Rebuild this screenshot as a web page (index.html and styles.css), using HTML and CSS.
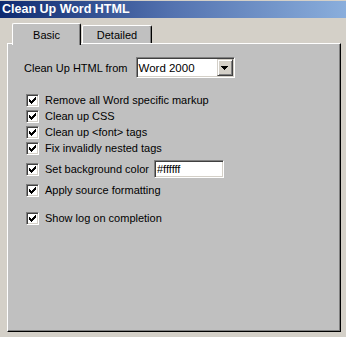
FILE: index.html
```html
<!DOCTYPE html>
<html lang="en">
<head>
  <meta charset="UTF-8" />
  <title>Clean Up Word HTML</title>
  <link rel="stylesheet" href="styles.css">
</head>
<body>
  <div class="titlebar">Clean Up Word HTML</div>

  <div class="dialog">
    <div class="tabs">
      <div class="tab active">Basic</div>
      <div class="tab">Detailed</div>
    </div>

    <div class="panel">
      <div class="field-row">
        <span class="label">Clean Up HTML from</span>
        <div class="select">
          <span class="select-value">Word 2000</span>
          <span class="select-btn">
            <svg width="7" height="4" viewBox="0 0 7 4" shape-rendering="crispEdges">
              <path d="M0 0h7v1H0z M1 1h5v1H1z M2 2h3v1H2z M3 3h1v1H3z" fill="#000"/>
            </svg>
          </span>
        </div>
      </div>

      <div class="group first">
        <div class="check-row">
          <span class="checkbox"><svg width="7" height="7" viewBox="0 0 7 7" shape-rendering="crispEdges"><path d="M0 2h1v3H0z M1 3h1v3H1z M2 4h1v3H2z M3 3h1v3H3z M4 2h1v3H4z M5 1h1v3H5z M6 0h1v3H6z" fill="#000"/></svg></span>
          <span>Remove all Word specific markup</span>
        </div>
        <div class="check-row">
          <span class="checkbox"><svg width="7" height="7" viewBox="0 0 7 7" shape-rendering="crispEdges"><path d="M0 2h1v3H0z M1 3h1v3H1z M2 4h1v3H2z M3 3h1v3H3z M4 2h1v3H4z M5 1h1v3H5z M6 0h1v3H6z" fill="#000"/></svg></span>
          <span>Clean up CSS</span>
        </div>
        <div class="check-row">
          <span class="checkbox"><svg width="7" height="7" viewBox="0 0 7 7" shape-rendering="crispEdges"><path d="M0 2h1v3H0z M1 3h1v3H1z M2 4h1v3H2z M3 3h1v3H3z M4 2h1v3H4z M5 1h1v3H5z M6 0h1v3H6z" fill="#000"/></svg></span>
          <span>Clean up &lt;font&gt; tags</span>
        </div>
        <div class="check-row">
          <span class="checkbox"><svg width="7" height="7" viewBox="0 0 7 7" shape-rendering="crispEdges"><path d="M0 2h1v3H0z M1 3h1v3H1z M2 4h1v3H2z M3 3h1v3H3z M4 2h1v3H4z M5 1h1v3H5z M6 0h1v3H6z" fill="#000"/></svg></span>
          <span>Fix invalidly nested tags</span>
        </div>
      </div>

      <div class="group second">
        <div class="check-row tall">
          <span class="checkbox"><svg width="7" height="7" viewBox="0 0 7 7" shape-rendering="crispEdges"><path d="M0 2h1v3H0z M1 3h1v3H1z M2 4h1v3H2z M3 3h1v3H3z M4 2h1v3H4z M5 1h1v3H5z M6 0h1v3H6z" fill="#000"/></svg></span>
          <span>Set background color</span>
          <span class="textbox">#ffffff</span>
        </div>
        <div class="check-row">
          <span class="checkbox"><svg width="7" height="7" viewBox="0 0 7 7" shape-rendering="crispEdges"><path d="M0 2h1v3H0z M1 3h1v3H1z M2 4h1v3H2z M3 3h1v3H3z M4 2h1v3H4z M5 1h1v3H5z M6 0h1v3H6z" fill="#000"/></svg></span>
          <span>Apply source formatting</span>
        </div>
      </div>

      <div class="group third">
        <div class="check-row">
          <span class="checkbox"><svg width="7" height="7" viewBox="0 0 7 7" shape-rendering="crispEdges"><path d="M0 2h1v3H0z M1 3h1v3H1z M2 4h1v3H2z M3 3h1v3H3z M4 2h1v3H4z M5 1h1v3H5z M6 0h1v3H6z" fill="#000"/></svg></span>
          <span>Show log on completion</span>
        </div>
      </div>
    </div>
  </div>
</body>
</html>
```

FILE: styles.css
```css
body {
  margin: 0;
  width: 346px;
  height: 337px;
  overflow: hidden;
  background: #d4d0c8;
  font-family: "Liberation Sans", Arial, sans-serif;
  font-size: 11px;
  color: #000;
}

.titlebar {
  margin-top: 1px;
  height: 17px;
  line-height: 17px;
  padding-left: 2px;
  background: linear-gradient(to right, #0e2a70, #5473b0 50%, #8aaedc);
  color: #fff;
  font-weight: bold;
  font-size: 12.5px;
}

.dialog {
  padding: 5px 5px 0 7px;
}

.tabs {
  display: flex;
  align-items: flex-start;
  padding-left: 5px;
  height: 20px;
}

.tab {
  box-sizing: border-box;
  width: 70px;
  height: 18px;
  margin-top: 2px;
  margin-left: 1px;
  background: #c0c0c0;
  border-top: 1px solid #fff;
  border-left: 1px solid #fff;
  border-right: 1px solid #000;
  border-radius: 2px 2px 0 0;
  box-shadow: inset -1px 0 #808080;
  display: flex;
  align-items: center;
  justify-content: center;
}

.tab.active {
  width: 69px;
  height: 22px;
  margin-top: 0;
  margin-left: 0;
  position: relative;
  z-index: 1;
}

.panel {
  box-sizing: border-box;
  width: 334px;
  height: 289px;
  background: #c0c0c0;
  border: 1px solid;
  border-color: #fff #000 #000 #fff;
  box-shadow: inset -1px -1px #808080;
  padding: 13px 0 0 16px;
}

.field-row {
  display: flex;
  align-items: center;
  gap: 8px;
}

.select {
  box-sizing: border-box;
  width: 99px;
  height: 21px;
  background: #fff;
  border: 1px solid;
  border-color: #808080 #fff #fff #808080;
  box-shadow: inset 1px 1px #404040, inset -1px -1px #d4d0c8;
  display: flex;
  align-items: center;
  justify-content: space-between;
  padding: 1px 1px 1px 2px;
  font-size: 11.5px;
}

.select-btn {
  box-sizing: border-box;
  width: 16px;
  height: 17px;
  background: #d4d0c8;
  border: 1px solid;
  border-color: #d4d0c8 #404040 #404040 #d4d0c8;
  box-shadow: inset 1px 1px #fff, inset -1px -1px #808080;
  display: flex;
  align-items: center;
  justify-content: center;
}

.group.first {
  margin-top: 14px;
}

.group.second {
  margin-top: 4px;
}

.group.third {
  margin-top: 12px;
}

.check-row {
  display: flex;
  align-items: center;
  height: 16px;
  padding-left: 2px;
  white-space: nowrap;
}

.check-row.tall {
  height: 18px;
  margin-bottom: 4px;
}

.checkbox {
  box-sizing: border-box;
  flex-shrink: 0;
  width: 13px;
  height: 13px;
  margin-right: 6px;
  padding: 2px;
  background: #fff;
  border: 1px solid;
  border-color: #808080 #fff #fff #808080;
  box-shadow: inset 1px 1px #404040, inset -1px -1px #d4d0c8;
  display: flex;
}

.checkbox svg {
  display: block;
}

.textbox {
  box-sizing: border-box;
  flex-shrink: 0;
  width: 70px;
  height: 18px;
  margin-left: 5px;
  padding-left: 2px;
  background: #fff;
  border: 1px solid;
  border-color: #808080 #fff #fff #808080;
  box-shadow: inset 1px 1px #404040, inset -1px -1px #d4d0c8;
  display: flex;
  align-items: center;
}
```
